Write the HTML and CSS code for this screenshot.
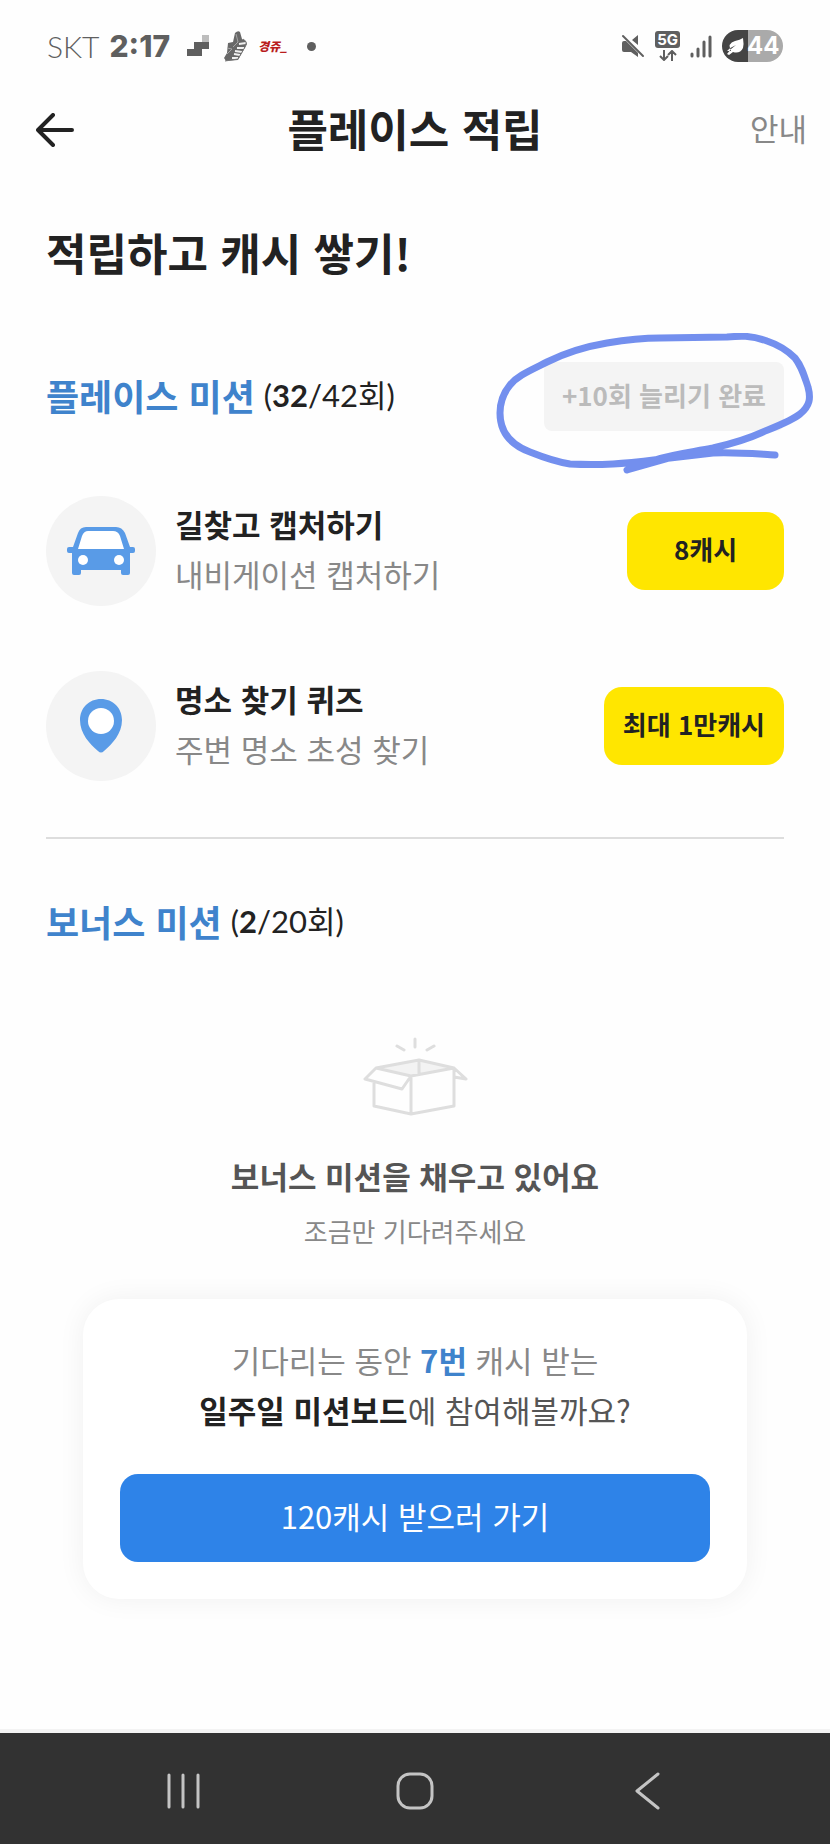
FILE: index.html
```html
<!DOCTYPE html>
<html lang="ko">
<head>
<meta charset="utf-8">
<meta name="viewport" content="width=device-width, initial-scale=1">
<title>플레이스 적립</title>
<link rel="stylesheet" href="styles.css">
</head>
<body>
<div class="app">
  <div class="status">
    <div class="status-left">
      <span class="carrier">SKT</span>
      <span class="clock">2:17</span>
      <svg class="steps" width="24" height="24" viewBox="0 0 24 24" aria-hidden="true">
        <path d="M16 1h7v8h-7z" fill="#bdbdbd"/>
        <path d="M8 8h15v7h-7v7H1v-7h7z" fill="#5f5f5f"/>
      </svg>
      <svg class="shoe" width="26" height="32" viewBox="0 0 26 32" aria-hidden="true">
        <path d="M13 3q3-3 5-1l2 7 4 2 1 3-5 9-4 7-12 1-2-3 3-5 1-10 5-1z" fill="#686868"/>
        <path d="M14 4l2 8-5 5M5 18l5 1-5 5" fill="none" stroke="#a5a5a5" stroke-width="1"/>
        <path d="M17 14l7-1M15 18l7 0M13 21l7 1M12 24l6 1M10 28l6 0" fill="none" stroke="#f1f1f1" stroke-width="2"/>
        <path d="M21 9q5 3 2 8l-7 12-13 2" fill="none" stroke="#777" stroke-width="1"/>
      </svg>
      <span class="alert">경쥬_</span>
      <span class="dot"></span>
    </div>
    <div class="status-right">
      <svg width="24" height="24" viewBox="0 0 24 24" aria-hidden="true">
        <path d="M1 9q0-2 2-2h4l10 8v8l-7-5H3q-2 0-2-2zM11 6l6-5v10z" fill="#5f5f5f"/>
        <path d="M3 2l19 19" stroke="#fefefe" stroke-width="4"/>
        <path d="M2 2l20 20" stroke="#5f5f5f" stroke-width="2" stroke-linecap="round"/>
      </svg>
      <span class="network">
        <span class="fiveg">5G</span>
        <svg width="18" height="11" viewBox="0 0 18 11" aria-hidden="true">
          <path d="M5 0v10M1 6l4 4 4-4M13 11V1M9 5l4-4 4 4" fill="none" stroke="#5f5f5f" stroke-width="2"/>
        </svg>
      </span>
      <svg width="22" height="23" viewBox="0 0 22 23" aria-hidden="true">
        <path d="M2 19v2M8 14v7M14 7v14M20 2v19" stroke="#5f5f5f" stroke-width="3" stroke-linecap="round"/>
      </svg>
      <span class="battery">
        <svg width="18" height="17" viewBox="0 0 18 17" aria-hidden="true">
          <path d="M4 13Q0 5 8 3q5-1 8-3 1 6 0 10-3 6-10 4l-4 3-2-1q3-5 9-9-5 2-9 6z" fill="#fff"/>
        </svg>
        <span>44</span>
      </span>
    </div>
  </div>

  <header class="topbar">
    <button class="back" type="button" aria-label="뒤로">
      <svg width="38" height="34" viewBox="0 0 38 34" aria-hidden="true">
        <path d="M17 2L2 17l15 15M2 17h34" fill="none" stroke="#222" stroke-width="4" stroke-linecap="round" stroke-linejoin="round"/>
      </svg>
    </button>
    <h1>플레이스 적립</h1>
    <a class="guide" href="#">안내</a>
  </header>

  <main>
    <h2 class="headline">적립하고 캐시 쌓기!</h2>

    <section>
      <div class="section-head">
        <h3>플레이스 미션</h3>
        <span class="count">(<b>32</b>/42회)</span>
        <button class="extend" type="button" disabled>+10회 늘리기 완료</button>
        <svg class="marker" width="320" height="146" viewBox="0 0 320 146" aria-hidden="true">
          <path d="M132 137L160 127C178 121 198 119 218 115C240 110 255 105 268 99C285 92 298 87 305 81C315 73 316 65 313 54C309 42 307 34 300 25C292 17 284 12 272 8C256 2 244 3 232 4L165 5C145 5 130 7 112 10C88 14 70 20 52 29C34 38 22 43 15 52C6 63 5 72 5 80C5 100 16 112 35 119C50 125 62 129 75 131Q96 132 118 131C138 130 158 127 175 125L218 120C240 119 262 121 280 122M132 137L185 122L215 118" fill="none" stroke="#738fee" stroke-width="7" stroke-linecap="round" stroke-linejoin="round"/>
        </svg>
      </div>
      <ul class="missions">
        <li>
          <span class="avatar">
            <svg width="68" height="50" viewBox="0 0 68 50" aria-hidden="true">
              <path d="M21 5h26q6 0 8 6l5 13H8l5-13q2-6 8-6z" fill="#fff"/>
              <path d="M19 1h30q6 0 9 6l5 14h3q2 0 2 2v2q0 2-2 2h-3v20q0 2-2 2h-5q-2 0-2-2v-3H14v3q0 2-2 2H7q-2 0-2-2V27H2q-2 0-2-2v-2q0-2 2-2h4l5-14q2-6 8-6zm2 4q-4 0-6 5l-4 13h46l-4-13q-2-5-7-5z" fill="#599be7"/>
              <circle cx="16" cy="34" r="5" fill="#fff"/><circle cx="52" cy="34" r="5" fill="#fff"/>
            </svg>
          </span>
          <span class="mission-text"><strong>길찾고 캡처하기</strong><span>내비게이션 캡처하기</span></span>
          <button class="reward" type="button">8캐시</button>
        </li>
        <li>
          <span class="avatar">
            <svg width="42" height="54" viewBox="0 0 42 54" aria-hidden="true">
              <path d="M21 0C9 0 0 9 0 21c0 14 10 24 18 31q3 3 6 0c8-7 18-17 18-31C42 9 33 0 21 0z" fill="#599be7"/>
              <circle cx="21" cy="22" r="13" fill="#fff"/>
            </svg>
          </span>
          <span class="mission-text"><strong>명소 찾기 퀴즈</strong><span>주변 명소 초성 찾기</span></span>
          <button class="reward" type="button">최대 1만캐시</button>
        </li>
      </ul>
    </section>

    <section class="bonus">
      <div class="section-head">
        <h3>보너스 미션</h3>
        <span class="count">(<b>2</b>/20회)</span>
      </div>
      <div class="empty">
        <svg width="106" height="80" viewBox="0 0 106 80" aria-hidden="true">
          <path d="M14 31L57 22l34 9-42 9z" fill="#f3f3f3"/>
          <g fill="none" stroke="#dedede" stroke-width="3" stroke-linecap="round" stroke-linejoin="round">
            <path d="M53 2v8M35 9l7 4M72 9l-7 4M14 31l43-8 35 8-43 8zM14 31L3 42l37 10 9-13M92 31l12 11-12-2M12 46v23l37 8V39M49 77l43-8V31M57 23v14"/>
          </g>
        </svg>
        <p class="empty-title">보너스 미션을 채우고 있어요</p>
        <p class="empty-note">조금만 기다려주세요</p>
      </div>
      <div class="card">
        <p>기다리는 동안 <b class="times">7번</b> 캐시 받는</p>
        <p class="invite"><b>일주일 미션보드</b>에 참여해볼까요?</p>
        <button class="go" type="button">120캐시 받으러 가기</button>
      </div>
    </section>
  </main>

  <nav class="sysnav" aria-label="시스템 탐색">
    <button type="button" aria-label="최근 앱">
      <svg width="36" height="38" viewBox="0 0 36 38" aria-hidden="true"><path d="M4 3v32M18 3v32M33 3v32" stroke="#c4c4c4" stroke-width="3" stroke-linecap="round"/></svg>
    </button>
    <button type="button" aria-label="홈">
      <svg width="38" height="38" viewBox="0 0 38 38" aria-hidden="true"><rect x="2" y="2" width="34" height="34" rx="12" fill="none" stroke="#c4c4c4" stroke-width="3"/></svg>
    </button>
    <button type="button" aria-label="뒤로 가기">
      <svg width="26" height="38" viewBox="0 0 26 38" aria-hidden="true"><path d="M24 2L3 19l21 17" fill="none" stroke="#c4c4c4" stroke-width="3" stroke-linecap="round" stroke-linejoin="round"/></svg>
    </button>
  </nav>
</div>
</body>
</html>
```
FILE: styles.css
```css
* { box-sizing: border-box; }
body {
  margin: 0;
  background: #fefefe;
  color: #222;
  font-family: "Noto Sans CJK KR", "Noto Sans", sans-serif;
  font-size: 31px;
  line-height: 50px;
}
h1, h2, h3, p, ul { margin: 0; padding: 0; }
svg { display: block; flex: none; }
button {
  border: 0;
  padding: 0;
  background: none;
  font: inherit;
  color: inherit;
  cursor: pointer;
}
.app {
  display: flex;
  flex-direction: column;
  min-height: 100vh;
}

/* Status bar */
.status {
  display: flex;
  justify-content: space-between;
  align-items: center;
  height: 92px;
  padding: 0 47px;
  color: #5f5f5f;
}
.status-left, .status-right { display: flex; align-items: center; }
.carrier { font-family: Lato, sans-serif; font-size: 30px; font-weight: 300; }
.clock {
  margin-left: 10px;
  font-family: Inter, sans-serif;
  font-size: 30px;
  font-weight: 800;
}
.steps { margin-left: 16px; }
.shoe { margin-left: 12px; }
.alert {
  margin-left: 10px;
  color: #b91d1d;
  font-size: 12px;
  font-weight: 900;
  font-style: italic;
  line-height: 20px;
}
.dot {
  width: 9px;
  height: 9px;
  margin-left: 20px;
  border-radius: 50%;
  background: #5f5f5f;
}
.status-right { gap: 10px; }
.network { display: flex; flex-direction: column; align-items: center; gap: 2px; }
.fiveg {
  padding: 0 2px;
  border-radius: 3px;
  background: #5f5f5f;
  color: #fff;
  font-family: Inter, sans-serif;
  font-size: 15px;
  font-weight: 700;
  line-height: 17px;
}
.battery {
  display: flex;
  align-items: center;
  gap: 2px;
  width: 61px;
  height: 32px;
  padding-left: 5px;
  border-radius: 16px;
  background: linear-gradient(90deg, #444 42%, #aaa 42%);
  color: #fff;
  font-family: Inter, sans-serif;
  font-size: 24px;
  font-weight: 700;
}

/* Top bar */
.topbar {
  display: grid;
  grid-template-columns: 1fr auto 1fr;
  align-items: center;
  height: 72px;
  padding: 0 23px;
}
.back { justify-self: start; margin-left: 13px; padding-top: 4px; }
h1 { font-size: 44px; line-height: 64px; }
.guide {
  justify-self: end;
  color: #888;
  text-decoration: none;
}

/* Content */
main { padding: 56px 46px 128px; }
.headline { font-size: 44px; line-height: 64px; }
.section-head {
  position: relative;
  display: flex;
  align-items: center;
}
.headline + section { padding-top: 78px; }
h3 {
  padding-bottom: 4px;
  color: #3f83cc;
  font-size: 36px;
  line-height: 52px;
}
.count {
  margin-left: 9px;
  padding-bottom: 4px;
  font-family: Lato, "Noto Sans CJK KR", sans-serif;
  font-size: 31px;
}
.extend {
  height: 69px;
  margin-left: auto;
  padding: 0 18px 4px;
  border-radius: 8px;
  background: #f4f4f4;
  color: #bbb;
  font-size: 26px;
  font-weight: 700;
  cursor: default;
}
.marker {
  position: absolute;
  top: -29px;
  right: -31px;
  pointer-events: none;
}
.missions {
  display: flex;
  flex-direction: column;
  gap: 65px;
  padding: 65px 0 56px;
  border-bottom: 2px solid #ddd;
  list-style: none;
}
.missions li { display: flex; align-items: center; }
.avatar {
  display: flex;
  align-items: center;
  justify-content: center;
  width: 110px;
  height: 110px;
  border-radius: 50%;
  background: #f4f4f4;
}
.mission-text {
  display: flex;
  flex-direction: column;
  margin-left: 19px;
  padding-bottom: 4px;
}
.mission-text span { color: #888; }
.reward {
  min-width: 157px;
  height: 78px;
  margin-left: auto;
  padding: 0 19px 4px;
  border-radius: 18px;
  background: #ffe600;
  font-size: 26px;
  font-weight: 700;
}
.bonus { padding-top: 56px; }
.empty {
  display: flex;
  flex-direction: column;
  align-items: center;
  padding-top: 86px;
}
.empty-title { margin-top: 34px; color: #555; font-weight: 700; }
.empty-note { margin-top: 5px; color: #888; font-size: 26px; }
.card {
  margin: 43px 37px 0;
  padding: 36px 37px 37px;
  border-radius: 36px;
  background: #fff;
  box-shadow: 0 0 28px rgba(0, 0, 0, 0.06);
  color: #888;
  text-align: center;
}
.times { color: #3f83cc; }
.invite { color: #555; }
.invite b { color: #222; }
.go {
  display: block;
  width: 100%;
  height: 88px;
  margin-top: 39px;
  padding-bottom: 4px;
  border-radius: 18px;
  background: #2e83e8;
  color: #fff;
}

/* System navigation */
.sysnav {
  display: grid;
  grid-template-columns: repeat(3, 1fr);
  align-items: center;
  height: 115px;
  margin-top: auto;
  padding: 4px 67px 0;
  border-top: 4px solid #f3f3f3;
  background: #323232;
}
.sysnav button { justify-self: center; }
```
